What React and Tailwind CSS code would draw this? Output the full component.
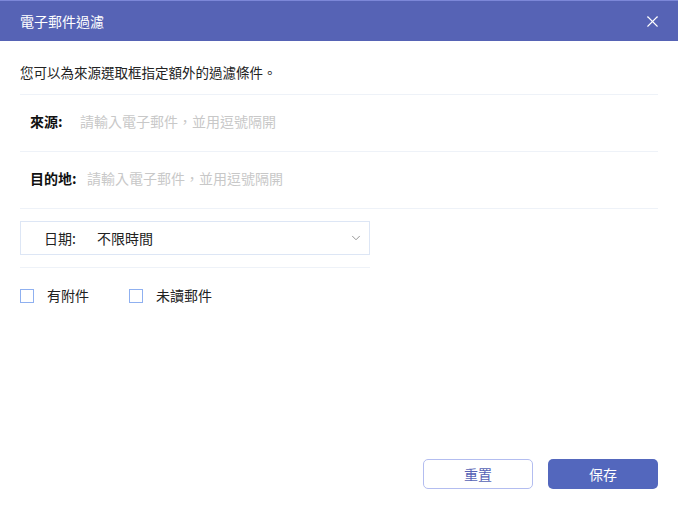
import { X, ChevronDown } from "lucide-react"

const FONT = { fontFamily: '"Noto Sans CJK TC", "Liberation Sans", sans-serif' }

function Checkbox({ label, className = "" }) {
    return (
        <label className={`flex items-center ${className}`}>
            <span className="h-[14px] w-[14px] border border-[#8fb0f0] bg-white" />
            <span className="ml-[13px] text-[14px] text-[#222]">{label}</span>
        </label>
    )
}

export default function App() {
    return (
        <div className="flex h-[509px] w-[678px] flex-col bg-white" style={FONT}>
            {/* header */}
            <div className="flex h-[41px] items-center justify-between border-t border-[#7c87d8] bg-[#5663b5] pl-[20px] pr-[16px] text-white">
                <span className="text-[14px]">電子郵件過濾</span>
                <X size={19} strokeWidth={1.4} />
            </div>

            <div className="flex flex-1 flex-col px-[20px]">
                <p className="pt-[21px] text-[13.5px] leading-[20px] text-[#222]">您可以為來源選取框指定額外的過濾條件。</p>
                <div className="mt-[12px] border-b border-[#eef2f8]" />

                <div className="flex h-[56px] items-center pb-[3px] pl-[10px] text-[14px]">
                    <span className="w-[50px] font-bold text-[#111]">來源:</span>
                    <span className="text-[#c8c8c8]">請輸入電子郵件，並用逗號隔開</span>
                </div>
                <div className="border-b border-[#eef2f8]" />

                <div className="flex h-[56px] items-center pb-[3px] pl-[10px] text-[14px]">
                    <span className="w-[57px] font-bold text-[#111]">目的地:</span>
                    <span className="text-[#c8c8c8]">請輸入電子郵件，並用逗號隔開</span>
                </div>
                <div className="border-b border-[#eef2f8]" />

                <div className="mt-[12px] flex h-[34px] w-[350px] items-center border border-[#dde6f5] pl-[23px] pr-[6px] text-[14px] text-[#222]">
                    <span className="w-[53px]">日期:</span>
                    <span className="flex-1">不限時間</span>
                    <ChevronDown size={14} strokeWidth={1.5} className="text-[#888]" />
                </div>
                <div className="mt-[12px] w-[350px] border-b border-[#eef2f8]" />

                <div className="mt-[17px] flex items-center">
                    <Checkbox label="有附件" />
                    <Checkbox label="未讀郵件" className="ml-[40px]" />
                </div>

                <div className="mt-auto mb-[20px] flex justify-end gap-[15px]">
                    <button className="h-[30px] w-[110px] rounded-[5px] border border-[#b3bdf0] bg-white text-[14px] text-[#5663b5]">重置</button>
                    <button className="h-[30px] w-[110px] rounded-[5px] bg-[#5367bd] text-[14px] text-white">保存</button>
                </div>
            </div>
        </div>
    )
}
